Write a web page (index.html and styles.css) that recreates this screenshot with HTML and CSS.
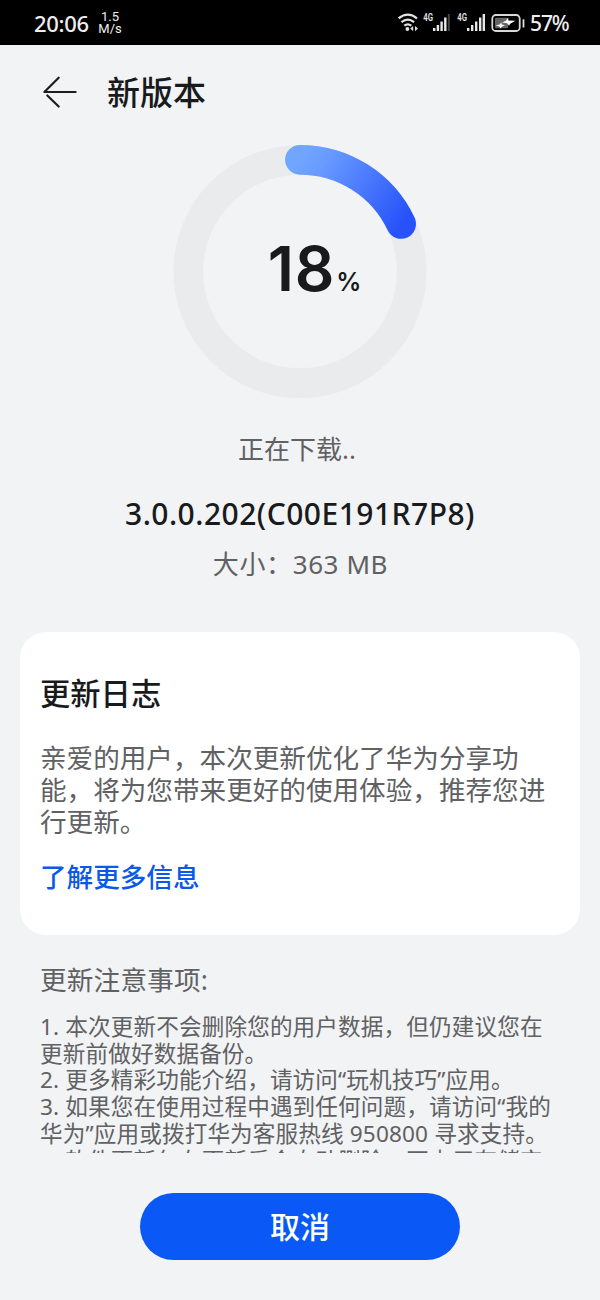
FILE: index.html
```html
<!DOCTYPE html>
<html lang="zh-CN">
<head>
<meta charset="utf-8">
<title>新版本</title>
<link rel="stylesheet" href="styles.css">
</head>
<body>
<div class="screen">
  <div class="status-bar">
    <span class="clock">20:06</span>
    <span class="speed"><span>1.5</span><span>M/s</span></span>
    <svg class="status-icons" width="130" height="45" viewBox="0 0 130 45">
      <g fill="none" stroke="#e4e4e4" stroke-width="2.2">
        <path d="M.6 18.3q9.2-7.2 18.4 0"/>
        <path d="M3.5 22.1q6.3-5 12.6 0"/>
        <path d="M6.3 25.7q3.5-2.8 7 0"/>
      </g>
      <circle cx="9.4" cy="29" r="1.9" fill="#e4e4e4"/>
      <path d="M15.2 26l-3 2.6 3 2.6zM17 26l3 2.6-3 2.6z" fill="#ddd"/>
      <g class="network">
        <text x="25.2" y="21.3" textLength="9.8" lengthAdjust="spacingAndGlyphs">4G</text>
        <text x="59.2" y="21.3" textLength="9.8" lengthAdjust="spacingAndGlyphs">4G</text>
      </g>
      <g fill="#e8e8e8">
        <path d="M35 28h2.4v3H35zM38.7 25h2.4v6h-2.4zM42.4 21.5h2.4V31h-2.4zM46.1 17.5h2.4V31h-2.4z"/>
        <path d="M49.8 14h2V31h-2z" fill="#444"/>
        <path d="M69 28h2.4v3H69zM73 25h2.4v6H73zM77 21.5h2.4V31H77zM81 17.5h2.4V31H81zM84.6 14H87V31h-2.4z"/>
      </g>
      <rect x="94.3" y="15" width="27.4" height="16" rx="3.5" fill="none" stroke="#d8d8d8" stroke-width="1.8"/>
      <rect x="97" y="17.8" width="13" height="10.4" rx="1" fill="#666"/>
      <path d="M110.2 17.6l.2 3 7 .2-5.2 3-1.2 2-1.8-2.6-5.2-.6 3.8-1.8z" fill="#fff"/>
      <path d="M103.2 22.4l.6 2.2 3.2.6-3 1.4-1.6 2-.8-2.2-4-.8 4-1.2z" fill="#fff"/>
      <path d="M124.6 19.3h1.8v8.2h-1.8z" fill="#ddd"/>
    </svg>
    <span class="battery">57%</span>
  </div>

  <div class="app-bar">
    <svg class="back" width="36" height="36" viewBox="0 0 36 36">
      <path d="M16.7 2.7L2.4 17H33.6M5.3 20.5L16.7 31.5" fill="none" stroke="#1c1d1f" stroke-width="2.2" stroke-linecap="round" stroke-linejoin="round"/>
    </svg>
    <h1 class="page-title">新版本</h1>
  </div>

  <div class="progress">
    <svg class="ring" width="254" height="254" viewBox="0 0 254 254">
      <defs>
        <linearGradient id="arc" gradientUnits="userSpaceOnUse" x1="125" y1="15" x2="228" y2="82">
          <stop offset="0" stop-color="#71a6ff"/>
          <stop offset=".2" stop-color="#689aff"/>
          <stop offset="1" stop-color="#2752fa"/>
        </linearGradient>
      </defs>
      <circle cx="127" cy="127.5" r="111.7" fill="none" stroke="#eaebed" stroke-width="29.8"/>
      <path d="M127 15.8A111.7 111.7 0 0 1 228.1 79.9" fill="none" stroke="url(#arc)" stroke-width="29.8" stroke-linecap="round"/>
    </svg>
    <div class="percent"><span class="value">18</span><span class="sign">%</span></div>
  </div>

  <p class="state">正在下载..</p>
  <p class="version">3.0.0.202(C00E191R7P8)</p>
  <p class="size">大小：363 MB</p>

  <section class="card">
    <h2 class="card-title">更新日志</h2>
    <p class="card-text">亲爱的用户，本次更新优化了华为分享功<br>能，将为您带来更好的使用体验，推荐您进<br>行更新。</p>
    <a class="more">了解更多信息</a>
  </section>

  <section class="notes">
    <h3 class="notes-title">更新注意事项:</h3>
    <div class="notes-text">
      <div>1. 本次更新不会删除您的用户数据，但仍建议您在<br>更新前做好数据备份。</div>
      <div>2. 更多精彩功能介绍，请访问“玩机技巧”应用。</div>
      <div>3. 如果您在使用过程中遇到任何问题，请访问“我的<br>华为”应用或拨打华为客服热线 950800 寻求支持。</div>
      <div>4. 软件更新包在更新后会自动删除，不占用存储空</div>
    </div>
  </section>

  <button class="cancel">取消</button>
</div>
</body>
</html>
```
FILE: styles.css
```css
* { box-sizing: border-box; margin: 0; padding: 0; }
body { background: #f2f3f5; }
.screen {
  width: 600px;
  height: 1300px;
  overflow: hidden;
  display: flex;
  flex-direction: column;
  background: #f2f3f5;
  color: #191a1c;
  font-family: "Noto Sans", "Noto Sans CJK SC", sans-serif;
  white-space: nowrap;
}
.status-bar {
  flex: none;
  height: 45px;
  padding-left: 34px;
  display: flex;
  align-items: center;
  background: #000;
  color: #eee;
}
.clock { width: 64px; font-size: 22px; font-weight: 500; letter-spacing: -0.3px; line-height: 45px; padding-top: 2px; }
.speed { width: 24px; display: flex; flex-direction: column; align-items: center; font: 13px/12px Roboto, sans-serif; }
.status-icons { margin-left: 276px; flex: none; }
.network text { font-family: Roboto, sans-serif; font-weight: 600; font-size: 11px; fill: #e4e4e4; }
.battery { margin-left: 2px; font-size: 21px; font-weight: 500; letter-spacing: -1.1px; line-height: 45px; padding-top: 1px; }

.app-bar { flex: none; height: 99px; padding: 0 0 4px 42px; display: flex; align-items: center; }
.back { flex: none; }
.page-title { margin-left: 29px; font-size: 33px; line-height: 40px; font-weight: 500; }

.progress { flex: none; height: 254px; display: grid; place-items: center; }
.ring, .percent { grid-area: 1 / 1; }
.percent { display: flex; align-items: baseline; padding: 9px 0 0 29px; line-height: 80px; font-family: Inter, "Noto Sans", sans-serif; }
.value { font-size: 62px; font-weight: 600; letter-spacing: 0.8px; }
.sign { margin-left: 1px; font-size: 25px; font-weight: 600; }

.state { margin-top: 33px; text-align: center; font-size: 26px; line-height: 36px; color: #606163; padding-right: 6px; }
.version { margin-top: 27px; text-align: center; font-size: 30px; line-height: 40px; font-weight: 500; letter-spacing: 0.48px; }
.size { margin-top: 12px; padding-left: 1px; text-align: center; font-size: 26px; line-height: 36px; letter-spacing: 0.6px; color: #606163; }

.card {
  flex: none;
  height: 303px;
  margin: 50px 20px 0;
  padding: 42px 20px 0;
  border-radius: 26px;
  background: #fff;
}
.card-title { font-size: 30.3px; line-height: 40px; font-weight: 500; }
.card-text { margin-top: 29px; font-size: 26.6px; line-height: 31.8px; color: #606163; }
.more { display: block; margin-top: 21px; font-size: 26.6px; line-height: 36px; font-weight: 500; color: #0a59e8; }

.notes { flex: none; height: 218px; padding: 27px 40px 0; overflow: hidden; color: #606163; }
.notes-title { font-size: 26.6px; line-height: 36px; font-weight: 400; letter-spacing: 0.2px; }
.notes-text { margin-top: 16px; font-size: 22.6px; line-height: 26.7px; letter-spacing: 0.14px; }

.cancel {
  flex: none;
  width: 320px;
  height: 67px;
  margin: 40px auto 0;
  border: 0;
  border-radius: 34px;
  background: #0a59f7;
  color: #fff;
  font: 500 30px/40px "Noto Sans", "Noto Sans CJK SC", sans-serif;
}
```
